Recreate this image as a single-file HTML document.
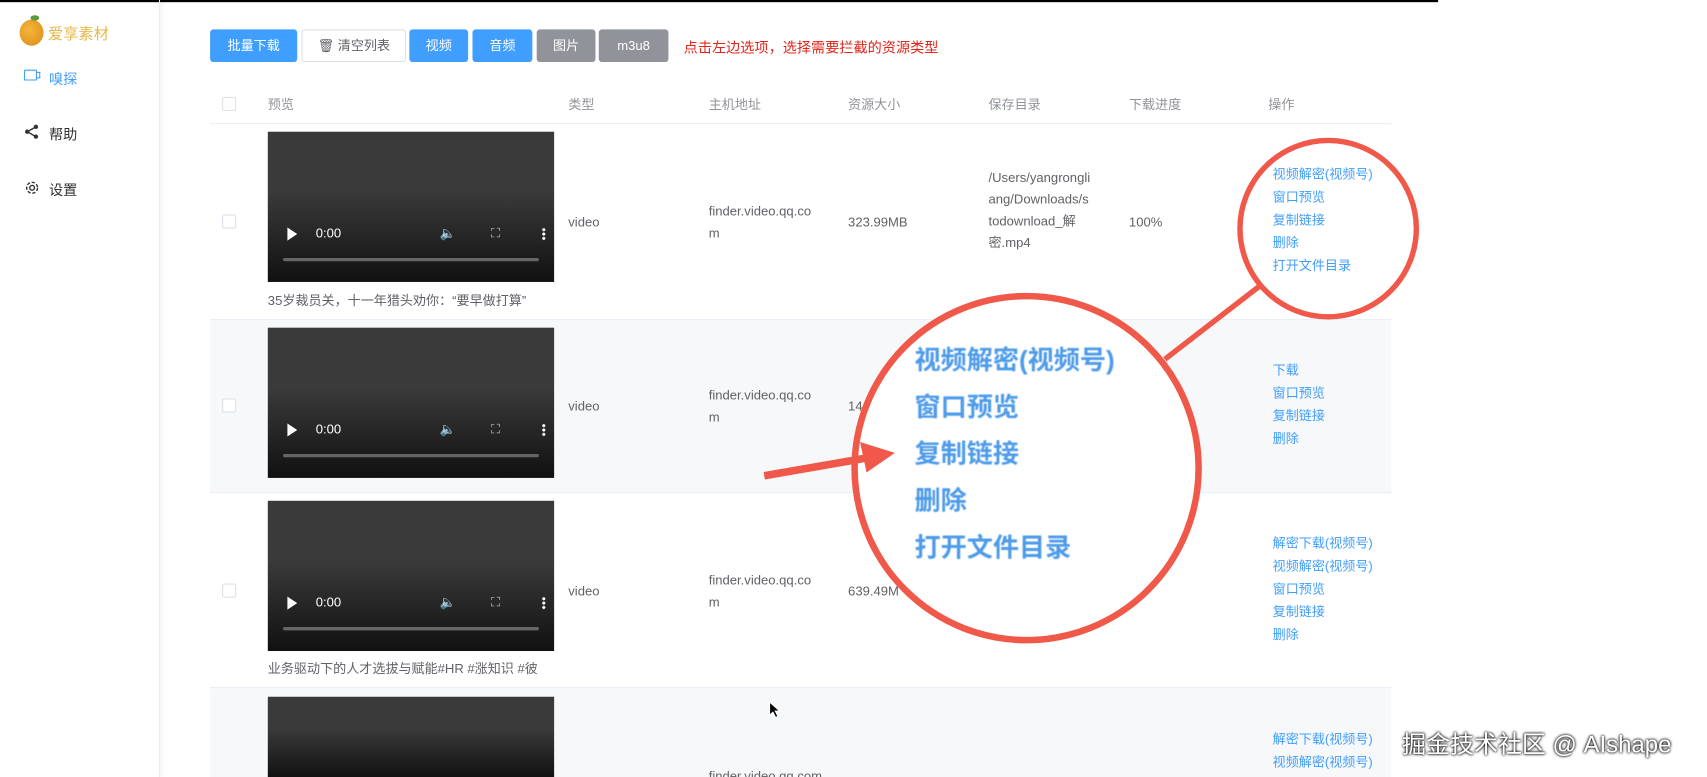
<!DOCTYPE html>
<html><head><meta charset="utf-8"><style>
*{box-sizing:border-box;margin:0;padding:0}
html,body{width:1707px;height:777px;overflow:hidden;background:#fff}
#w{width:1568px;height:714px;transform:scale(1.08865);transform-origin:0 0;position:relative;font-family:"Liberation Sans","Noto Sans CJK SC",sans-serif;font-size:12px;color:#606266}
.abs{position:absolute}
.side{left:0;top:0;width:147px;height:714px;border-right:1px solid #eee;box-shadow:2px 0 6px rgba(0,0,0,.05)}
.btn{position:absolute;top:27px;height:30px;border-radius:3px;color:#fff;font-size:12px;line-height:30px;text-align:center}
.b{background:#409eff}.g{background:#909399}
.row{position:absolute;left:193px;width:1085px;border-bottom:1px solid #ebeef5}
.vid{position:absolute;left:246px;width:263px;height:138px;background:linear-gradient(#3a3a3a 40%,#111)}
.vid .t{position:absolute;left:44px;top:86px;color:#fff;font-size:12px}
.vid .bar{position:absolute;left:14px;right:14px;top:116px;height:3px;background:#666;border-radius:2px}
.vid .pl{position:absolute;left:18px;top:88px;width:0;height:0;border-left:9px solid #fff;border-top:6px solid transparent;border-bottom:6px solid transparent}
.vid .ic{position:absolute;top:86px;color:#bbb;font-size:12px}
.vid .dots{position:absolute;left:252px;top:88px;width:3px;height:12px;background:radial-gradient(circle,#fff 1.3px,transparent 1.5px) 0 0/3px 4px}
.cb{position:absolute;left:204px;width:13px;height:13px;border:1px solid #dcdfe6;border-radius:2px;background:#fff}
.lk{position:absolute;left:1169px;color:#409eff;font-size:12px;line-height:21px}
.tx{position:absolute;font-size:12px;color:#606266;line-height:20px}
.mag{position:absolute;left:840px;top:310px;color:#4e9bea;font-size:24px;line-height:43px;font-weight:bold;filter:blur(.6px)}
</style></head><body><div id="w">
<div class="abs" style="left:0;top:0;width:1321px;height:2px;background:#000"></div>
<div class="abs side"></div>
<div class="abs" style="left:18px;top:18px;width:22px;height:24px;border-radius:50%;background:radial-gradient(circle at 40% 40%,#f5b63a,#d9891a)"></div>
<div class="abs" style="left:28px;top:14px;width:8px;height:5px;border-radius:50%;background:#5a9a3a"></div>
<div class="abs" style="left:44px;top:21px;color:#e6b84a;font-size:14px">爱享素材</div>
<div class="abs" style="left:22px;top:64px;width:12px;height:10px;border:1.5px solid #409eff;border-radius:1px"></div>
<div class="abs" style="left:34px;top:66px;width:3px;height:6px;border:1.5px solid #409eff;border-left:none"></div>
<div class="abs" style="left:45px;top:62px;color:#409eff;font-size:13px">嗅探</div>
<svg class="abs" style="left:22px;top:114px" width="14" height="14"><circle cx="11" cy="2.5" r="2" fill="#333"/><circle cx="3" cy="7" r="2" fill="#333"/><circle cx="11" cy="11.5" r="2" fill="#333"/><path d="M11 2.5L3 7L11 11.5" stroke="#333" stroke-width="1.3" fill="none"/></svg>
<div class="abs" style="left:45px;top:113px;color:#303133;font-size:13px">帮助</div>
<svg class="abs" style="left:22px;top:165px" width="15" height="15"><circle cx="7.5" cy="7.5" r="5" fill="none" stroke="#333" stroke-width="1.3" stroke-dasharray="3 1.6"/><circle cx="7.5" cy="7.5" r="2.2" fill="none" stroke="#333" stroke-width="1.3"/></svg>
<div class="abs" style="left:45px;top:164px;color:#303133;font-size:13px">设置</div>

<div class="btn b" style="left:193px;width:80px">批量下载</div>
<div class="btn" style="left:277px;width:96px;border:1px solid #dcdfe6;color:#606266;line-height:28px">🗑 清空列表</div>
<div class="btn b" style="left:376px;width:54px">视频</div>
<div class="btn b" style="left:434px;width:55px">音频</div>
<div class="btn g" style="left:493px;width:54px">图片</div>
<div class="btn g" style="left:550px;width:64px">m3u8</div>
<div class="abs" style="left:628px;top:33px;color:#e4251b;font-size:13px">点击左边选项，选择需要拦截的资源类型</div>

<div class="row" style="top:78px;height:36px"></div>
<div class="cb" style="top:89px"></div>
<div class="tx" style="left:246px;top:86px;color:#909399">预览</div>
<div class="tx" style="left:522px;top:86px;color:#909399">类型</div>
<div class="tx" style="left:651px;top:86px;color:#909399">主机地址</div>
<div class="tx" style="left:779px;top:86px;color:#909399">资源大小</div>
<div class="tx" style="left:908px;top:86px;color:#909399">保存目录</div>
<div class="tx" style="left:1037px;top:86px;color:#909399">下载进度</div>
<div class="tx" style="left:1165px;top:86px;color:#909399">操作</div>

<div class="row" style="top:114px;height:180px"></div>
<div class="row" style="top:294px;height:159px;background:#f7f8fa"></div>
<div class="row" style="top:453px;height:179px"></div>
<div class="row" style="top:632px;height:82px;background:#f7f8fa;border:none"></div>

<div class="cb" style="top:197px"></div><div class="cb" style="top:366px"></div><div class="cb" style="top:536px"></div>
<div class="vid" style="top:121px"><div class="pl"></div><div class="t">0:00</div><div class="ic" style="left:158px">🔈</div><div class="ic" style="left:205px">⛶</div><div class="dots"></div><div class="bar"></div></div>
<div class="vid" style="top:301px"><div class="pl"></div><div class="t">0:00</div><div class="ic" style="left:158px">🔈</div><div class="ic" style="left:205px">⛶</div><div class="dots"></div><div class="bar"></div></div>
<div class="vid" style="top:460px"><div class="pl"></div><div class="t">0:00</div><div class="ic" style="left:158px">🔈</div><div class="ic" style="left:205px">⛶</div><div class="dots"></div><div class="bar"></div></div>
<div class="vid" style="top:640px;height:74px"></div>
<div class="tx" style="left:246px;top:266px">35岁裁员关，十一年猎头劝你：“要早做打算”</div>
<div class="tx" style="left:246px;top:604px">业务驱动下的人才选拔与赋能#HR #涨知识 #彼</div>

<div class="tx" style="left:522px;top:194px">video</div>
<div class="tx" style="left:522px;top:363px">video</div>
<div class="tx" style="left:522px;top:533px">video</div>
<div class="tx" style="left:651px;top:184px;width:100px;word-break:break-all">finder.video.qq.com</div>
<div class="tx" style="left:651px;top:353px;width:100px;word-break:break-all">finder.video.qq.com</div>
<div class="tx" style="left:651px;top:523px;width:100px;word-break:break-all">finder.video.qq.com</div>
<div class="tx" style="left:651px;top:703px">finder.video.qq.com</div>
<div class="tx" style="left:779px;top:194px">323.99MB</div>
<div class="tx" style="left:779px;top:363px">14</div>
<div class="tx" style="left:779px;top:533px">639.49M</div>
<div class="tx" style="left:908px;top:153px;width:95px;word-break:break-all">/Users/yangrongliang/Downloads/stodownload_解密.mp4</div>
<div class="tx" style="left:1037px;top:194px">100%</div>

<div class="lk" style="top:150px">视频解密(视频号)<br>窗口预览<br>复制链接<br>删除<br>打开文件目录</div>
<div class="lk" style="top:330px">下载<br>窗口预览<br>复制链接<br>删除</div>
<div class="lk" style="top:489px">解密下载(视频号)<br>视频解密(视频号)<br>窗口预览<br>复制链接<br>删除</div>
<div class="lk" style="top:669px">解密下载(视频号)<br>视频解密(视频号)</div>

<svg class="abs" style="left:0;top:0" width="1568" height="714">
<circle cx="1220" cy="210" r="81" fill="none" stroke="#f0584a" stroke-width="5"/>
<line x1="1158" y1="262" x2="1070" y2="330" stroke="#f0584a" stroke-width="5"/>
<circle cx="943" cy="430" r="158" fill="#fff" stroke="#f0584a" stroke-width="6"/>
<line x1="702" y1="437" x2="800" y2="420" stroke="#f0584a" stroke-width="7"/>
<polygon points="790,406 822,416 796,434" fill="#f0584a"/>
</svg>
<div class="mag">视频解密(视频号)<br>窗口预览<br>复制链接<br>删除<br>打开文件目录</div>
<svg class="abs" style="left:706px;top:644px" width="12" height="16"><path d="M1 1L1 13L4 10L6.5 15L8.5 14L6 9L10 9Z" fill="#000" stroke="#fff" stroke-width=".8"/></svg>
<div class="abs" style="left:1288px;top:666px;color:#fff;font-size:22px;text-shadow:0 0 2px #000,0 0 3px #000">掘金技术社区 @ AIshape</div>
</div></body></html>
